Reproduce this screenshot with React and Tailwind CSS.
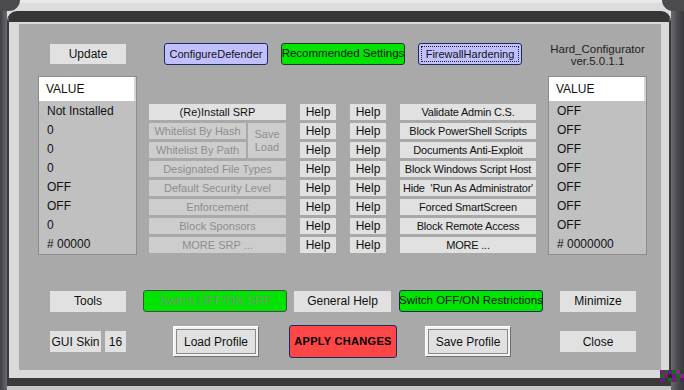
import React from 'react';

function Btn({ className = '', off, children }) {
    return (
        <div className={`flex items-center justify-center whitespace-nowrap text-[11px] leading-none ${off ? 'bg-[#cdcdcd] text-[#8e8e8e]' : 'bg-[#e1e1e1] text-[#111]'} ${className}`}>
            {children}
        </div>
    );
}

function ValueList({ rows }) {
    return (
        <div className="flex h-[179px] w-[99px] flex-col border border-[#8c8c8c] bg-[#c0c0c0]">
            <div className="flex h-[24px] items-center border-r-2 border-[#d6d6d6] bg-white pl-[7px]">VALUE</div>
            {rows.map((r, i) => (
                <div key={i} className="flex h-[19px] items-center pl-[8px]">{r}</div>
            ))}
        </div>
    );
}

function ProfileBtn({ children, className = '' }) {
    return (
        <div className={`flex h-[31px] w-[86px] border border-t-white border-l-white border-r-[#707070] border-b-[#707070] bg-[#f2f2f2] p-[2px] ${className}`}>
            <div className="flex flex-1 items-center justify-center border border-[#8a8a8a] bg-[#e1e1e1] text-[12px]">{children}</div>
        </div>
    );
}

export default function App() {
    const srpOff = ['Designated File Types', 'Default Security Level', 'Enforcement', 'Block Sponsors', 'MORE SRP ...'];
    const rightCol = [
        'Validate Admin C.S.',
        'Block PowerShell Scripts',
        'Documents Anti-Exploit',
        'Block Windows Script Host',
        "Hide  'Run As Administrator'",
        'Forced SmartScreen',
        'Block Remote Access',
        'MORE ...',
    ];
    const helps = Array.from({ length: 8 });

    return (
        <div className="relative flex h-[390px] w-[684px] overflow-hidden bg-[#dcdcdc] font-['Liberation_Sans',Arial,sans-serif] text-[12px] text-[#111]">
            {/* frame left */}
            <div className="w-[7px] bg-linear-to-r from-[#3f3f44] to-[#6a6a70]" />

            <div className="flex flex-1 flex-col">
                <div className="h-[11px] border-t-[3px] border-[#e9e9e9] bg-[#dcdcdc]" />
                <div className="flex flex-1 flex-col rounded-t-[10px] border-x-2 border-t-[11px] border-b-[8px] border-[#3a3a3a] border-t-[#363636] bg-[#dadada] pt-[2px] pl-[10px] pr-[8px] pb-[8px]">
                    <div className="flex flex-1 flex-col bg-[#a9a9a9] pt-[19px]">
                        {/* top row */}
                        <div className="flex h-[23px] items-start">
                            <Btn className="ml-[31px] mt-[1px] h-[20px] w-[76px] text-[12px]">Update</Btn>
                            <div className="ml-[38px] flex h-[22px] w-[104px] items-center justify-center whitespace-nowrap rounded-[3px] border border-[#1b2b5b] bg-[#c0c0ff] text-[11px]">ConfigureDefender</div>
                            <div className="ml-[13px] flex h-[22px] w-[124px] items-center justify-center whitespace-nowrap rounded-[3px] border border-[#1f3a2a] bg-[#00e400] text-[11.5px]">Recommended Settings</div>
                            <div className="ml-[13px] flex h-[22px] w-[104px] rounded-[3px] border border-[#1b2b5b] bg-[#c0c0ff] p-[2px]">
                                <div className="flex flex-1 items-center justify-center whitespace-nowrap border border-dotted border-[#222] text-[11px]">FirewallHardening</div>
                            </div>
                            <div className="ml-[26px] flex w-[99px] flex-col items-center text-[11.5px] leading-[12px] text-[#222]">
                                <span>Hard_Configurator</span>
                                <span>ver.5.0.1.1</span>
                            </div>
                        </div>

                        {/* main area */}
                        <div className="mt-[10px] flex items-start">
                            <div className="ml-[19px]">
                                <ValueList rows={['Not Installed', '0', '0', '0', 'OFF', 'OFF', '0', '# 00000']} />
                            </div>

                            <div className="ml-[12px] mt-[28px] flex items-start">
                                <div className="flex w-[137px] flex-col gap-[3px]">
                                    <Btn className="h-[16px] w-full">(Re)Install SRP</Btn>
                                    <div className="flex">
                                        <div className="flex w-[97px] flex-col gap-[3px]">
                                            <Btn off className="h-[16px] w-full">Whitelist By Hash</Btn>
                                            <Btn off className="h-[16px] w-full">Whitelist By Path</Btn>
                                        </div>
                                        <div className="ml-[2px] flex h-[35px] w-[38px] flex-col items-center justify-center bg-[#cdcdcd] text-[11px] leading-[13px] text-[#8e8e8e]">
                                            <span>Save</span>
                                            <span>Load</span>
                                        </div>
                                    </div>
                                    {srpOff.map((t) => (
                                        <Btn key={t} off className="h-[16px] w-full">{t}</Btn>
                                    ))}
                                </div>

                                <div className="ml-[14px] flex w-[36px] flex-col gap-[3px]">
                                    {helps.map((_, i) => (
                                        <Btn key={i} className="h-[16px] w-full text-[12px]">Help</Btn>
                                    ))}
                                </div>
                                <div className="ml-[14px] flex w-[36px] flex-col gap-[3px]">
                                    {helps.map((_, i) => (
                                        <Btn key={i} className="h-[16px] w-full text-[12px]">Help</Btn>
                                    ))}
                                </div>

                                <div className="ml-[14px] flex w-[136px] flex-col gap-[3px]">
                                    {rightCol.map((t) => (
                                        <Btn key={t} className="h-[16px] w-full whitespace-pre tracking-[-0.2px]">{t}</Btn>
                                    ))}
                                </div>
                            </div>

                            <div className="ml-[12px]">
                                <ValueList rows={['OFF', 'OFF', 'OFF', 'OFF', 'OFF', 'OFF', 'OFF', '# 0000000']} />
                            </div>
                        </div>

                        {/* bottom row 1 */}
                        <div className="mt-[35px] flex h-[22px] items-center">
                            <Btn className="ml-[31px] h-[21px] w-[76px] text-[12px]">Tools</Btn>
                            <div className="ml-[17px] flex h-[22px] w-[144px] items-center justify-center whitespace-nowrap rounded-[3px] border border-[#4a4a4a] bg-[#00e400] text-[12px] text-[#6c9c6c]">Switch OFF/ON SRP</div>
                            <Btn className="ml-[7px] h-[21px] w-[97px] text-[12px]">General Help</Btn>
                            <div className="ml-[8px] flex h-[22px] w-[144px] items-center justify-center whitespace-nowrap rounded-[3px] border border-[#1b2b5b] bg-[#00e400] text-[11.5px]">Switch OFF/ON Restrictions</div>
                            <Btn className="ml-[17px] h-[21px] w-[76px] text-[12px]">Minimize</Btn>
                        </div>

                        {/* bottom row 2 */}
                        <div className="mt-[13px] flex h-[33px] items-center">
                            <Btn className="ml-[31px] h-[21px] w-[51px] text-[12px]">GUI Skin</Btn>
                            <Btn className="ml-[4px] h-[21px] w-[21px] text-[12px]">16</Btn>
                            <ProfileBtn className="ml-[47px]">Load Profile</ProfileBtn>
                            <div className="ml-[30px] flex h-[33px] w-[108px] items-center justify-center whitespace-nowrap rounded-[3px] border border-[#1b2b5b] bg-[#ff4646] text-[11px] font-bold tracking-[0.3px] text-black">APPLY CHANGES</div>
                            <ProfileBtn className="ml-[28px]">Save Profile</ProfileBtn>
                            <Btn className="ml-[49px] h-[21px] w-[76px] text-[12px]">Close</Btn>
                        </div>
                    </div>
                </div>
                <div className="h-[4px] bg-[#c6c6c6]" />
            </div>

            {/* frame right */}
            <div className="w-[13px] bg-linear-to-r from-[#6a6a70] via-[#4a4a4f] to-[#38383c]" />

            {/* corner hooks */}
            <div className="absolute left-0 top-0 h-[11px] w-[20px] rounded-br-[12px] bg-[#4a4a4f]" />
            <div className="absolute right-0 top-0 h-[11px] w-[22px] rounded-bl-[12px] bg-[#4a4a4f]" />

            {/* colour noise bottom-right */}
            <div className="absolute bottom-[8px] right-0 grid grid-cols-6">
                {['#7a1a7a', '#2a5a2a', '#6a1a8a', '#1a6a1a', '#8a2a8a', '#3a3a3a',
                  '#1a6a1a', '#7a1a7a', '#2a2a2a', '#6a1a8a', '#1a6a1a', '#7a2a7a',
                  '#6a1a8a', '#3a3a3a', '#1a6a1a', '#7a1a7a', '#2a5a2a', '#5a1a6a'].map((c, i) => (
                    <div key={i} className="h-[4px] w-[4px]" style={{ background: c }} />
                ))}
            </div>
        </div>
    );
}
